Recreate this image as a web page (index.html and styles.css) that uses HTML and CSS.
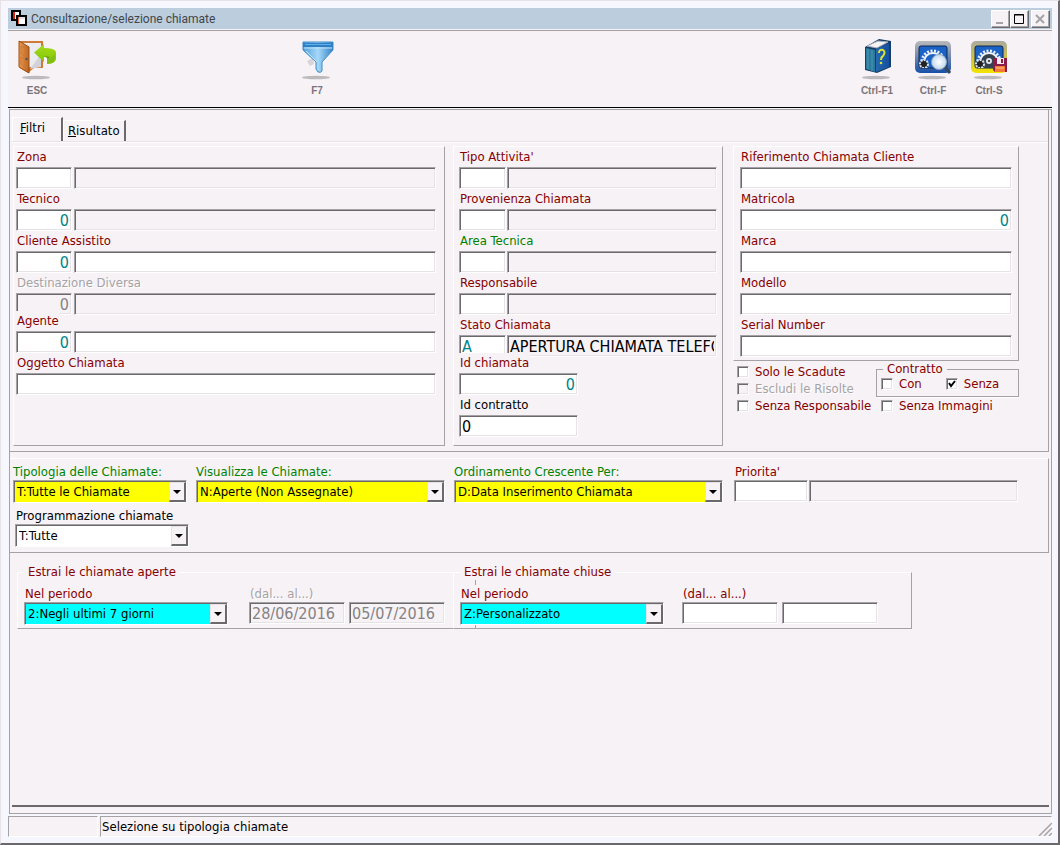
FILE: index.html
```html
<!DOCTYPE html>
<html lang="it">
<head>
<meta charset="utf-8">
<title>Consultazione/selezione chiamate</title>
<link rel="stylesheet" href="styles.css">
</head>
<body>
<div class="window">
  <header class="titlebar">
    <svg class="app-icon" width="18" height="18" viewBox="0 0 18 18" aria-hidden="true">
      <rect x="2" y="1" width="8" height="9" fill="#fff" stroke="#000" stroke-width="2"/>
      <path d="M3 2h2v7H3z" fill="#e02010"/>
      <rect x="7" y="6" width="9" height="9" fill="#fff" stroke="#000" stroke-width="2"/>
      <path d="M8 7h1v7H8z" fill="#f0604a"/><path d="M9 7h6v2H9z" fill="#dfdfdf"/>
    </svg>
    <h1 class="title">Consultazione/selezione chiamate</h1>
    <div class="win-buttons">
      <button class="win-btn" type="button" aria-label="Riduci a icona"><svg width="16" height="14" viewBox="0 0 16 14"><path d="M4 11h7" stroke="#a5a2a5" stroke-width="2"/></svg></button>
      <button class="win-btn" type="button" aria-label="Ingrandisci"><svg width="16" height="14" viewBox="0 0 16 14"><path d="M3.500 2.500h9v9h-9zM3 3h10" fill="none" stroke="#000"/></svg></button>
      <button class="win-btn win-btn-close" type="button" aria-label="Chiudi"><svg width="16" height="14" viewBox="0 0 16 14"><path d="M4 3l8 8M12 3l-8 8" stroke="#a5a2a5" stroke-width="2"/></svg></button>
    </div>
  </header>

  <div class="toolbar">
    <button class="tool" type="button">
      <svg width="40" height="42" viewBox="0 0 40 42" aria-hidden="true">
        <defs>
          <linearGradient id="door" x1="0" x2="1"><stop offset="0" stop-color="#ef9a50"/><stop offset="1" stop-color="#b9611c"/></linearGradient>
          <linearGradient id="arrow" x1="0" y1="0" x2="0" y2="1"><stop offset="0" stop-color="#a8dc20"/><stop offset="1" stop-color="#7cc400"/></linearGradient>
        </defs>
        <ellipse cx="19" cy="38.500" rx="14" ry="1.700" fill="#bdbabd"/>
        <path d="M2 2h24v27h-9l-6 5L3 29z" fill="#cf7a35"/>
        <path d="M5 4h19v24H12z" fill="#ececf0"/>
        <path d="M13 30L24 15v13z" fill="#d2d2d8"/>
        <path d="M2 2l10 6v26L2 28z" fill="url(#door)" stroke="#9c5014"/>
        <path d="M4 7l6 3v8l-6-3zM4 18l6 3v8l-6-4z" fill="none" stroke="#c87a3a"/>
        <circle cx="9.500" cy="20" r="1.200" fill="#555"/>
        <path d="M17 13.500L27 5v4q11 0 12 4v7q-1 5-9 5v-6q3 1 3-1h-6v5z" fill="url(#arrow)"/>
        <path d="M30 19q6 0 8-4v5q-2 4-8 4z" fill="#84bd18"/><path d="M27 17l6 1q-1 2-3 1z" fill="#5f9e05"/>
      </svg>
      <span>ESC</span>
    </button>
    <button class="tool tool-filter" type="button">
      <svg width="40" height="42" viewBox="0 0 40 42" aria-hidden="true">
        <defs><linearGradient id="funnel" x1="0" x2="1"><stop offset="0" stop-color="#4fa0dc"/><stop offset=".5" stop-color="#a6d8f7"/><stop offset="1" stop-color="#3384c8"/></linearGradient></defs>
        <ellipse cx="19" cy="38.500" rx="14" ry="1.700" fill="#bdbabd"/>
        <path d="M10 22l6-3 1 6-4 2z" fill="#d8d5d8"/>
        <path d="M6 3h30v8L25 23v9q-1 2-4 1l-2-3v-7L6 11z" fill="url(#funnel)" stroke="#3e8ccc"/>
        <path d="M6 4h30v4H6z" fill="#2f7fc4"/><path d="M8 5h26v1H8z" fill="#62b0ea"/><path d="M7 9h28" stroke="#bfe4fa"/>
        <path d="M9 12l11 11" stroke="#c6e8fb"/>
      </svg>
      <span>F7</span>
    </button>
    <button class="tool tool-help" type="button">
      <svg width="40" height="42" viewBox="0 0 40 42" aria-hidden="true">
        <defs><linearGradient id="book" x1="0" x2="1"><stop offset="0" stop-color="#2668b0"/><stop offset="1" stop-color="#1450a0"/></linearGradient></defs>
        <ellipse cx="19" cy="38.500" rx="14" ry="1.700" fill="#bdbabd"/>
        <path d="M8 8L22 0l12 2v26l-14 6-12-3z" fill="#163e66"/>
        <path d="M10 7l11-5 10 1-11 6z" fill="#f4f4f4" stroke="#aab"/>
        <path d="M9 9l9 2v22l-9-3z" fill="#2c7a9e"/><path d="M11 10v20M15 11v21" stroke="#4a98b4"/>
        <path d="M19 10l13-6v24l-13 5z" fill="url(#book)"/>
        <path d="M22 14q0-4 4-3 3 2 0 6-2 1-2 4" fill="none" stroke="#d8e438" stroke-width="2"/><circle cx="24" cy="24" r="1.300" fill="#d8e438"/>
      </svg>
      <span>Ctrl-F1</span>
    </button>
    <button class="tool" type="button">
      <svg width="40" height="42" viewBox="0 0 40 42" aria-hidden="true">
        <defs>
          <linearGradient id="frameBlue" x1="0" y1="0" x2="0" y2="1"><stop offset="0" stop-color="#b9b9bc"/><stop offset=".4" stop-color="#8192b0"/><stop offset="1" stop-color="#174fa8"/></linearGradient>
          <radialGradient id="lens"><stop offset="0" stop-color="#fff"/><stop offset="1" stop-color="#c3d9ef"/></radialGradient>
          <clipPath id="screen"><rect x="6" y="7" width="28" height="22" rx="2"/></clipPath>
        </defs>
        <ellipse cx="19" cy="38.500" rx="14" ry="1.700" fill="#bdbabd"/>
        <rect x="2" y="2" width="36" height="32" rx="5" fill="url(#frameBlue)"/>
        <rect x="6" y="7" width="28" height="22" rx="2" fill="#1b62c6" stroke="#10284e"/>
        <g clip-path="url(#screen)">
          <circle cx="20" cy="23" r="11" fill="none" stroke="#e8eef6" stroke-width="3" stroke-dasharray="2 1.500"/>
          <circle cx="20" cy="23" r="9" fill="none" stroke="#eef3f8" stroke-width="2"/>
          <circle cx="11" cy="25" r="4" fill="#222" stroke="#dce4ee" stroke-width="2" stroke-dasharray="2 1"/>
        </g>
        <path d="M32 28l5 6" stroke="#38485a" stroke-width="3"/>
        <circle cx="26" cy="23" r="7.500" fill="url(#lens)" stroke="#8da5bd"/>
      </svg>
      <span>Ctrl-F</span>
    </button>
    <button class="tool" type="button">
      <svg width="40" height="42" viewBox="0 0 40 42" aria-hidden="true">
        <defs><linearGradient id="frameYellow" x1="0" y1="0" x2="0" y2="1"><stop offset="0" stop-color="#aaa9a4"/><stop offset=".5" stop-color="#cbc04a"/><stop offset="1" stop-color="#f4e400"/></linearGradient></defs>
        <ellipse cx="19" cy="38.500" rx="14" ry="1.700" fill="#bdbabd"/>
        <rect x="2" y="2" width="36" height="32" rx="5" fill="url(#frameYellow)"/>
        <rect x="6" y="7" width="28" height="22" rx="2" fill="#1b62c6" stroke="#10284e"/>
        <g clip-path="url(#screen)">
          <circle cx="20" cy="23" r="11" fill="none" stroke="#e8eef6" stroke-width="3" stroke-dasharray="2 1.500"/>
          <circle cx="20" cy="23" r="9" fill="#35414e" stroke="#eef3f8" stroke-width="2"/>
          <circle cx="11" cy="25" r="4" fill="#222" stroke="#dce4ee" stroke-width="2" stroke-dasharray="2 1"/>
          <circle cx="20" cy="22" r="2" fill="#222" stroke="#dce4ee" stroke-width="2"/>
        </g>
        <path d="M24 19h14v14H26l-2-2z" fill="#8c1c48"/><path d="M28 19h7v6h-7z" fill="#f3e9ee"/><path d="M32 20h2v4h-2z" fill="#8c1c48"/>
        <path d="M26 27h10v6H26z" fill="#f47a34"/><path d="M27 29h8" stroke="#fbc09a"/>
      </svg>
      <span>Ctrl-S</span>
    </button>
  </div>

  <main class="client">
    <section class="panel panel-filters">
      <div class="tabs" role="tablist">
        <button class="tab tab-active" type="button" role="tab" aria-selected="true"><u>F</u>iltri</button>
        <button class="tab" type="button" role="tab" aria-selected="false"><u>R</u>isultato</button>
      </div>
      <div class="columns">
        <div class="group group-people">
          <div class="field"><label for="zona">Zona</label><div class="pair"><input id="zona" type="text"><input type="text" readonly aria-label="Descrizione zona"></div></div>
          <div class="field"><label for="tecnico">Tecnico</label><div class="pair"><input id="tecnico" class="num" type="text" value="0"><input type="text" readonly aria-label="Nome tecnico"></div></div>
          <div class="field"><label for="cliente">Cliente Assistito</label><div class="pair"><input id="cliente" class="num" type="text" value="0"><input type="text" aria-label="Nome cliente"></div></div>
          <div class="field"><label class="off" for="dest">Destinazione Diversa</label><div class="pair"><input id="dest" class="num" type="text" value="0" disabled><input type="text" disabled aria-label="Nome destinazione"></div></div>
          <div class="field field-tight"><label for="agente">Agente</label><div class="pair"><input id="agente" class="num" type="text" value="0"><input type="text" aria-label="Nome agente"></div></div>
          <div class="field"><label for="oggetto">Oggetto Chiamata</label><input id="oggetto" type="text"></div>
        </div>

        <div class="group group-call">
          <div class="field"><label for="tipo">Tipo Attivita'</label><div class="pair"><input id="tipo" type="text"><input type="text" readonly aria-label="Descrizione tipo"></div></div>
          <div class="field"><label for="prov">Provenienza Chiamata</label><div class="pair"><input id="prov" type="text"><input type="text" readonly aria-label="Descrizione provenienza"></div></div>
          <div class="field"><label class="green" for="area">Area Tecnica</label><div class="pair"><input id="area" type="text"><input type="text" readonly aria-label="Descrizione area"></div></div>
          <div class="field"><label for="resp">Responsabile</label><div class="pair"><input id="resp" type="text"><input type="text" readonly aria-label="Nome responsabile"></div></div>
          <div class="field"><label for="stato">Stato Chiamata</label><div class="pair"><input id="stato" class="code" type="text" value="A"><input type="text" readonly value="APERTURA CHIAMATA TELEFONICA" aria-label="Descrizione stato"></div></div>
          <div class="field field-tight"><label for="idchiamata">Id chiamata</label><input id="idchiamata" class="num short" type="text" value="0"></div>
          <div class="field"><label class="black" for="idcontratto">Id contratto</label><input id="idcontratto" class="short" type="text" value="0"></div>
        </div>

        <div class="side">
          <div class="group group-device">
            <div class="field"><label for="rif">Riferimento Chiamata Cliente</label><input id="rif" type="text"></div>
            <div class="field"><label for="matricola">Matricola</label><input id="matricola" class="num" type="text" value="0"></div>
            <div class="field"><label for="marca">Marca</label><input id="marca" type="text"></div>
            <div class="field"><label for="modello">Modello</label><input id="modello" type="text"></div>
            <div class="field"><label for="serial">Serial Number</label><input id="serial" type="text"></div>
          </div>
          <div class="checks">
            <div class="check-list">
              <label class="check"><input type="checkbox">Solo le Scadute</label>
              <label class="check off"><input type="checkbox" disabled>Escludi le Risolte</label>
              <label class="check"><input type="checkbox">Senza Responsabile</label>
            </div>
            <div class="check-side">
              <fieldset class="contract">
                <legend>Contratto</legend>
                <label class="check"><input type="checkbox">Con</label>
                <label class="check"><input type="checkbox" checked>Senza</label>
              </fieldset>
              <label class="check check-images"><input type="checkbox">Senza Immagini</label>
            </div>
          </div>
        </div>
      </div>
    </section>

    <section class="panel panel-types">
      <div class="type-col">
        <label class="green" for="tipologia">Tipologia delle Chiamate:</label>
        <div class="combo yellow"><select id="tipologia"><option>T:Tutte le Chiamate</option></select></div>
        <div class="program">
          <label class="black" for="programma">Programmazione chiamate</label>
          <div class="combo"><select id="programma"><option>T:Tutte</option></select></div>
        </div>
      </div>
      <div class="type-col">
        <label class="green" for="visualizza">Visualizza le Chiamate:</label>
        <div class="combo yellow"><select id="visualizza"><option>N:Aperte (Non Assegnate)</option></select></div>
      </div>
      <div class="type-col">
        <label class="green" for="ordina">Ordinamento Crescente Per:</label>
        <div class="combo yellow"><select id="ordina"><option>D:Data Inserimento Chiamata</option></select></div>
      </div>
      <div class="type-col priority">
        <label for="priorita">Priorita'</label>
        <div class="pair"><input id="priorita" type="text"><input type="text" readonly aria-label="Descrizione priorita'"></div>
      </div>
    </section>

    <section class="periods">
      <fieldset class="period period-open">
        <legend>Estrai le chiamate aperte</legend>
        <div class="period-col">
          <label for="periodo1">Nel periodo</label>
          <div class="combo cyan"><select id="periodo1"><option>2:Negli ultimi 7 giorni</option></select></div>
        </div>
        <div class="dates">
          <label class="off" for="dal1">(dal... al...)</label>
          <div class="date-pair"><input id="dal1" type="text" value="28/06/2016" disabled><input type="text" value="05/07/2016" disabled aria-label="al"></div>
        </div>
      </fieldset>
      <fieldset class="period period-closed">
        <legend>Estrai le chiamate chiuse</legend>
        <div class="period-col">
          <label for="periodo2">Nel periodo</label>
          <div class="combo cyan"><select id="periodo2"><option>Z:Personalizzato</option></select></div>
        </div>
        <div class="dates">
          <label for="dal2">(dal... al...)</label>
          <div class="date-pair"><input id="dal2" type="text"><input type="text" aria-label="al"></div>
        </div>
      </fieldset>
    </section>
    <div class="page-end"></div>
  </main>

  <footer class="status">
    <div class="status-cell status-key"></div>
    <div class="status-cell status-text">Selezione su tipologia chiamate</div>
    <svg class="grip" width="14" height="14" viewBox="0 0 14 14" aria-hidden="true"><path d="M1 14L14 1M6 14l8-8M11 14l3-3" stroke="#a5a2a5" stroke-width="1.500"/></svg>
  </footer>
</div>
</body>
</html>
```
FILE: styles.css
```css
:root {
  --face: #f7f2f6;
  --frame: #f6f6ff;
  --light: #fff;
  --soft: #e6e2e6;
  --shade: #a5a2a5;
  --dark: #6b696b;
  --maroon: #840000;
  --green: #008200;
  --teal: #008284;
}
*, ::before, ::after { box-sizing: border-box; }
body {
  margin: 0;
  font: 13px/16px "DejaVu Sans Condensed", "DejaVu Sans", sans-serif;
  color: #000;
}
.window {
  display: flex;
  flex-direction: column;
  min-height: 100vh;
  padding: 7px 6px 6px 7px;
  background: var(--frame);
  border: 1px solid var(--soft);
  border-right: 2px solid var(--dark);
  border-bottom: 2px solid var(--dark);
}

/* Title bar */
.titlebar {
  display: flex;
  align-items: center;
  height: 22px;
  padding: 0 2px;
  background: #bccede;
  border-bottom: 1px solid var(--face);
}
.app-icon { margin-right: 3px; }
.title {
  margin: 0;
  font: 12px/20px Roboto, sans-serif;
  color: #42454a;
}
.win-buttons { display: flex; margin-left: auto; }
.win-btn {
  width: 19px;
  height: 18px;
  padding: 0;
  background: var(--face);
  border: 1px solid var(--light);
  border-right-color: var(--dark);
  border-bottom-color: var(--dark);
  box-shadow: inset -1px -1px var(--shade);
}
.win-btn svg { display: block; }
.win-btn-close { margin-left: 2px; }

/* Toolbar */
.toolbar {
  display: flex;
  height: 78px;
  padding: 8px 35px 0 1px;
  background: var(--face);
  border-top: 1px solid var(--shade);
  border-bottom: 1px solid #000;
}
.tool {
  display: flex;
  flex-direction: column;
  align-items: center;
  width: 56px;
  padding: 0;
  background: none;
  border: 0;
  font: bold 10px/12px "Liberation Sans", Arial, sans-serif;
  color: #7b757b;
}
.tool span { margin-top: 4px; }
.tool-filter { margin-left: 224px; }
.tool-help { margin-left: auto; }

/* Client area */
.client {
  flex: 1;
  display: flex;
  flex-direction: column;
  margin: 1px 0 0 1px;
  padding-right: 2px;
  background: var(--face);
  border: 1px solid var(--shade);
}
.panel {
  border-right: 1px solid var(--shade);
  border-bottom: 1px solid var(--shade);
}
.panel-filters { padding: 7px 0 5px 2px; }
.tabs {
  display: flex;
  align-items: flex-end;
  height: 25px;
  border-bottom: 1px solid var(--soft);
  box-shadow: 0 1px var(--light);
}
.tab {
  height: 21px;
  padding: 0 4px;
  background: var(--face);
  border: 1px solid var(--light);
  border-right: 2px solid var(--dark);
  border-bottom: 0;
  font: inherit;
}
.tab-active { height: 24px; padding: 0 16px 3px 7px; }

.columns {
  display: grid;
  grid-template-columns: 432fr 270fr 288fr;
  gap: 8px;
  margin: 4px 29px 0 1px;
}
.group {
  border: 1px solid var(--light);
  border-right-color: var(--shade);
  border-bottom-color: var(--shade);
}
.group-people { padding: 0 8px 0 2px; }
.group-call { padding: 0 5px 8px; }
.group-device { padding: 0 6px 3px; }
.side { padding-left: 2px; }
.field { display: flex; flex-direction: column; align-items: flex-start; }
.field-tight { margin-top: -4px; }
.field-tight > label { position: relative; background: var(--face); }
label { color: var(--maroon); }
.field > label { padding: 2px 1px; line-height: 16px; }
.green { color: var(--green); }
.black { color: #000; }
.off { color: var(--shade); text-shadow: 1px 1px #fff; }

/* Text boxes */
input[type="text"] {
  width: 100%;
  min-width: 0;
  height: 22px;
  padding: 0 2px;
  border: 1px solid var(--shade);
  border-right-color: var(--light);
  border-bottom-color: var(--light);
  box-shadow: inset 1px 1px var(--dark), inset -1px -1px var(--soft);
  border-radius: 0;
  background: #fff;
  font: 16px/18px "DejaVu Sans Condensed", "DejaVu Sans", sans-serif;
  color: #000;
}
input[type="text"]:read-only, input[type="text"]:disabled { background: var(--face); }
input[type="text"]:disabled { color: #848284; }
input.num { text-align: right; color: var(--teal); }
input.code { color: var(--teal); }
input.short { width: 119px; }
.pair { display: grid; grid-template-columns: 56px 1fr; gap: 2px; width: 100%; }
.group-call .pair { grid-template-columns: 47px 1fr; gap: 1px; }

/* Tick boxes */
.checks { display: flex; justify-content: space-between; padding: 2px 0 0 4px; }
.check-list { display: flex; flex-direction: column; }
.check { display: flex; align-items: center; gap: 6px; height: 17px; white-space: nowrap; }
input[type="checkbox"] {
  appearance: none;
  flex: none;
  width: 12px;
  height: 12px;
  margin: 0;
  background: #fff;
  border: 1px solid var(--shade);
  border-right-color: var(--light);
  border-bottom-color: var(--light);
  box-shadow: inset 1px 1px var(--dark), inset -1px -1px var(--soft);
}
input[type="checkbox"]:disabled { background: var(--face); }
input[type="checkbox"]:checked {
  background: #fff url("data:image/svg+xml,%3Csvg xmlns='http://www.w3.org/2000/svg' viewBox='0 0 10 10'%3E%3Cpath d='M2 4l2 3 4-5' fill='none' stroke='%23000' stroke-width='2'/%3E%3C/svg%3E") center / 10px 10px no-repeat;
}
fieldset { margin: 0; min-width: 0; }
legend { color: var(--maroon); }
.check-side { width: 143px; }
.contract {
  display: flex;
  gap: 24px;
  height: 34px;
  padding: 0 4px;
  border: 1px solid var(--shade);
  box-shadow: 0 1px var(--light);
}
.contract legend { line-height: 12px; margin-left: 2px; padding: 0 4px; }
.check-images { padding-left: 5px; }

/* Drop-downs */
.combo {
  position: relative;
  height: 23px;
  border: 1px solid var(--shade);
  border-right-color: var(--light);
  border-bottom-color: var(--light);
  box-shadow: inset 1px 1px var(--dark);
  background: #fff;
}
.combo select {
  display: block;
  width: 100%;
  height: 21px;
  padding: 1px 18px 0 3px;
  appearance: none;
  background: none;
  border: 0;
  font: inherit;
  color: #000;
}
.combo::before {
  content: "";
  position: absolute;
  top: 1px;
  right: 0;
  width: 17px;
  height: 20px;
  background: var(--face);
  border: 1px solid var(--soft);
  border-right: 2px solid var(--dark);
  border-bottom: 2px solid var(--dark);
  pointer-events: none;
}
.combo::after {
  content: "";
  position: absolute;
  top: 9px;
  right: 5px;
  border: 4px solid transparent;
  border-top-color: #000;
  border-bottom: 0;
  pointer-events: none;
}
.yellow { background: #ff0; }
.cyan { background: #0ff; }

.panel-types {
  display: grid;
  grid-template-columns: 174fr 249fr 269fr 286fr;
  column-gap: 9px;
  margin-top: 6px;
  padding: 4px 30px 5px 3px;
  border-top: 1px solid var(--light);
}
.type-col { display: flex; flex-direction: column; }
.type-col > label { line-height: 17px; }
.program { display: flex; flex-direction: column; margin: 5px -2px 0 2px; }
.program label { padding-left: 1px; }
.priority { padding-left: 2px; }
.priority > label { padding-left: 1px; }
.priority .pair { grid-template-columns: 74px 1fr; gap: 1px; }

/* Periods */
.periods {
  display: grid;
  grid-template-columns: 436fr 459fr;
  margin: 11px 137px 0 7px;
}
.period {
  position: relative;
  display: flex;
  gap: 18px;
  padding: 5px 6px 3px;
  border: 1px solid var(--light);
  border-bottom-color: var(--shade);
  border-right: 0;
}
.period-open { gap: 21px; }
.period legend { padding: 0 4px; }
.period .period-col { position: relative; display: flex; flex-direction: column; flex: 0 1 204px; }
.period label { padding-left: 1px; line-height: 17px; }
.period-col label { align-self: flex-start; background: var(--face); }
.dates { display: flex; flex-direction: column; flex: 1; }
.date-pair { display: grid; grid-template-columns: repeat(2, minmax(0, 96px)); gap: 4px; }
.period-closed { border-right: 1px solid var(--shade); }
.period-closed::before {
  content: "";
  position: absolute;
  top: 0;
  bottom: 0;
  left: 21px;
  border-left: 1px solid var(--shade);
}
.page-end {
  flex: 1;
  margin: 0 0 6px 2px;
  border-bottom: 2px solid var(--dark);
}

/* Status bar */
.status {
  display: flex;
  gap: 2px;
  margin-top: 2px;
  position: relative;
  background: var(--face);
}
.status-cell {
  height: 21px;
  padding: 2px 1px;
  border: 1px solid var(--shade);
  border-right-color: var(--light);
  border-bottom-color: var(--light);
}
.status-key { width: 90px; }
.status-text { flex: 1; }
.grip { position: absolute; right: 0; bottom: 1px; }
```
